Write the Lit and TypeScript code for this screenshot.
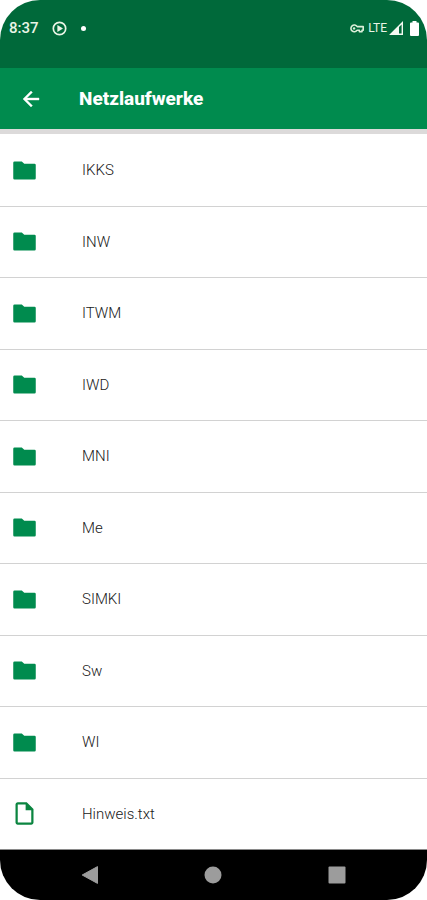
import { LitElement, html, css, svg } from "lit";
import { customElement, property, state } from "lit/decorators.js";

interface Entry {
  name: string;
  kind: "folder" | "file";
}

@customElement("status-bar")
class StatusBar extends LitElement {
  static styles = css`
    :host {
      display: flex;
      align-items: center;
      justify-content: space-between;
      box-sizing: border-box;
      height: 68px;
      padding: 0 8px 12px 9px;
      background: #00693a;
      color: #eaf5e6;
      font-size: 15px;
      line-height: 20px;
    }
    .group {
      display: flex;
      align-items: center;
    }
    .clock {
      margin-right: 13px;
      font-weight: 500;
    }
    .dot {
      width: 5px;
      height: 5px;
      margin-left: 14px;
      border-radius: 50%;
      background: #fff;
    }
    .network {
      margin: 0 2px 0 4px;
      font-size: 12px;
    }
    .battery {
      margin-left: 7px;
    }
    svg {
      display: block;
    }
  `;

  render() {
    return html`
      <div class="group">
        <span class="clock">8:37</span>
        <svg width="15" height="15" viewBox="0 0 15 15" aria-hidden="true">
          <circle cx="7.5" cy="7.5" r="6.2" fill="none" stroke="#eaf5e6" stroke-width="1.7" />
          <path d="M5.4 4 11 7.5 5.4 11z" fill="#eaf5e6" />
        </svg>
        <span class="dot"></span>
      </div>
      <div class="group">
        <svg width="14" height="9" viewBox="0 0 14 9" aria-hidden="true">
          <path
            d="M7.2 2.6A3.4 3.4 0 1 0 7.2 6.2H9.4V7.8H12V6.2H13.2V2.6z"
            fill="none" stroke="#dcefd9" stroke-width="1.6" stroke-linejoin="round" />
          <circle cx="4.1" cy="4.4" r="1.2" fill="#dcefd9" />
        </svg>
        <span class="network">LTE</span>
        <svg width="14" height="14" viewBox="0 0 14 14" aria-hidden="true">
          <path d="M14 0V14H0zM12.6 3.4 10 6V12.6H12.6z" fill="#f4faf2" fill-rule="evenodd" />
        </svg>
        <svg class="battery" width="9" height="15" viewBox="0 0 9 15" aria-hidden="true">
          <path d="M2.5 0H6.5V1.5H8Q9 1.5 9 2.5V14Q9 15 8 15H1Q0 15 0 14V2.5Q0 1.5 1 1.5H2.5z" fill="#fff" />
        </svg>
      </div>
    `;
  }
}

@customElement("app-bar")
class AppBar extends LitElement {
  @property() heading = "";

  static styles = css`
    :host {
      display: flex;
      align-items: center;
      height: 61px;
      padding-left: 19px;
      background: #008b4e;
      border-bottom: 5px solid #dcdada;
      color: #fff;
    }
    .back {
      display: block;
      padding: 0;
      border: 0;
      background: none;
      color: inherit;
      cursor: pointer;
    }
    svg {
      display: block;
    }
    h1 {
      margin: 0 0 0 36px;
      font-size: 19px;
      line-height: 24px;
      font-weight: 800;
    }
  `;

  render() {
    return html`
      <button class="back" aria-label="Zurück">
        <svg width="24" height="24" viewBox="0 0 24 24" aria-hidden="true">
          <path
            d="M20 11H7.83l5.59-5.59L12 4l-8 8 8 8 1.410-1.410L7.830 13H20v-2z"
            fill="currentColor" stroke="currentColor" stroke-width="0.4" />
        </svg>
      </button>
      <h1>${this.heading}</h1>
    `;
  }
}

@customElement("file-list")
class FileList extends LitElement {
  @property({ attribute: false }) entries: Entry[] = [];

  static styles = css`
    :host {
      display: flex;
      flex: 1;
      padding-top: 1px;
    }
    ul {
      display: flex;
      flex: 1;
      flex-direction: column;
      margin: 0;
      padding: 0;
      list-style: none;
    }
    li {
      display: flex;
      flex: 1;
      min-height: 56px;
      box-sizing: border-box;
      border-bottom: 1px solid #d2d2d2;
    }
    li:last-child {
      border-bottom-color: #8a8a8a;
    }
    .entry {
      display: flex;
      flex: 1;
      align-items: center;
      gap: 44px;
      padding: 0 11px;
      color: #202020;
      font-size: 15px;
      font-weight: 300;
      line-height: 20px;
      text-decoration: none;
    }
    svg {
      display: block;
      flex: none;
    }
  `;

  private icon(kind: Entry["kind"]) {
    return kind === "folder"
      ? svg`<path d="M3.2 4H9.600L11.800 6H20.900Q22 6 22 7.100V18.900Q22 20 20.900 20H3.100Q2 20 2 18.900V5.200Q2 4 3.200 4z" fill="#008b4e" />`
      : svg`<path d="M6 2C4.900 2 4 2.900 4 4V20C4 21.100 4.900 22 6 22H18C19.100 22 20 21.100 20 20V8L14 2zM6 4H13V9H18V20H6z" fill="#0b8540" fill-rule="evenodd" />`;
  }

  render() {
    return html`
      <ul>
        ${this.entries.map(
          (entry) => html`
            <li>
              <a class="entry" href="#">
                <svg width="27" height="27" viewBox="0 0 24 24" aria-hidden="true">${this.icon(entry.kind)}</svg>
                <span>${entry.name}</span>
              </a>
            </li>
          `
        )}
      </ul>
    `;
  }
}

@customElement("system-nav")
class SystemNav extends LitElement {
  static styles = css`
    :host {
      display: grid;
      grid-template-columns: repeat(3, 1fr);
      height: 50px;
      padding: 0 28px;
      background: #000;
    }
    button {
      display: grid;
      place-items: center;
      padding: 0;
      border: 0;
      background: none;
      color: #9c9c9c;
      cursor: pointer;
    }
  `;

  render() {
    return html`
      <button aria-label="Zurück">
        <svg width="18" height="18" viewBox="0 0 18 18" aria-hidden="true">
          <path d="M16.5 0.6V17.4L1.2 9z" fill="currentColor" stroke="currentColor" stroke-linejoin="round" />
        </svg>
      </button>
      <button aria-label="Startseite">
        <svg width="18" height="18" viewBox="0 0 18 18" aria-hidden="true">
          <circle cx="9" cy="9" r="8.5" fill="currentColor" />
        </svg>
      </button>
      <button aria-label="Übersicht">
        <svg width="18" height="18" viewBox="0 0 18 18" aria-hidden="true">
          <rect x="0.5" y="0.5" width="17" height="17" rx="1" fill="currentColor" />
        </svg>
      </button>
    `;
  }
}

@customElement("app-root")
class AppRoot extends LitElement {
  @state() private entries: Entry[] = [
    ...["IKKS", "INW", "ITWM", "IWD", "MNI", "Me", "SIMKI", "Sw", "WI"].map(
      (name): Entry => ({ name, kind: "folder" })
    ),
    { name: "Hinweis.txt", kind: "file" },
  ];

  static styles = css`
    :host {
      display: block;
      background: #fff;
      font-family: Roboto, "Liberation Sans", sans-serif;
    }
    .screen {
      display: flex;
      flex-direction: column;
      min-height: 100vh;
      border-radius: 40px;
      overflow: hidden;
    }
  `;

  render() {
    return html`
      <div class="screen">
        <status-bar></status-bar>
        <app-bar heading="Netzlaufwerke"></app-bar>
        <file-list .entries=${this.entries}></file-list>
        <system-nav></system-nav>
      </div>
    `;
  }
}
